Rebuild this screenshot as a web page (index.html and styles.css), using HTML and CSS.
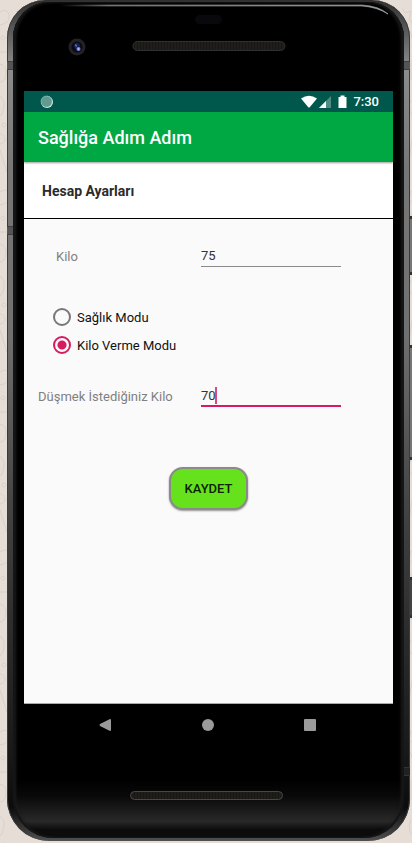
FILE: index.html
```html
<!DOCTYPE html>
<html lang="tr">
<head>
<meta charset="utf-8">
<meta name="viewport" content="width=device-width, initial-scale=1">
<title>Sağlığa Adım Adım</title>
<link rel="stylesheet" href="styles.css">
</head>
<body>
<svg class="wallpaper" aria-hidden="true">
  <defs>
    <pattern id="doodles" width="412" height="180" patternUnits="userSpaceOnUse">
      <g fill="none" stroke="#d8d0c9" stroke-width="1">
        <path d="M0 12q7-5 9 3t-9 10M0 52h8M3 36a2 2 0 1 0 .1 0M0 64q7 2 6 10t-6 8M0 96q5 4 4 11t-4 9M0 134a5 5 0 1 0 .1 0M0 150l7 22M4 123a2 2 0 1 0 .1 0"/>
        <path d="M402 8l3 5 6-2-2 8 3 4M404 31q8-2 8 8M411 60v20M411 100q-4 8 1 15M412 140l-3 20"/>
      </g>
    </pattern>
  </defs>
  <rect width="100%" height="100%" fill="url(#doodles)"/>
</svg>
<div class="phone">
  <i class="band band-left-top"></i>
  <i class="band band-left-mid"></i>
  <i class="band band-right-top"></i>
  <i class="band band-right-bottom"></i>
  <i class="key key-power"></i>
  <i class="key key-volume"></i>
  <i class="key key-small"></i>
  <div class="face">
    <svg class="bezel bezel-top" viewBox="0 0 369 89" aria-hidden="true">
      <defs>
        <pattern id="mesh" width="3" height="4" patternUnits="userSpaceOnUse">
          <rect width="3" height="4" fill="#181713"/>
          <path d="M1 0v4" stroke="#262420"/>
        </pattern>
        <linearGradient id="glint">
          <stop offset="0" stop-color="#000"/>
          <stop offset=".15" stop-color="#707578"/>
          <stop offset=".9" stop-color="#8d9294"/>
          <stop offset="1" stop-color="#aaa"/>
        </linearGradient>
      </defs>
      <path d="M36 3H338Q355 4 364 12Q353 5 338 4H36z" fill="url(#glint)" stroke="url(#glint)" stroke-width=".7"/>
      <rect x="171" y="13" width="27" height="9" rx="4.500" fill="#08080d"/>
      <circle cx="53" cy="45" r="8.500" fill="#242224"/>
      <circle cx="53" cy="45" r="5.500" fill="#0b0c18"/>
      <circle cx="53" cy="44" r="3" fill="#17204f"/>
      <path d="M51 42l2 1v2l-2-1z" fill="#5465bd"/>
      <circle cx="54.500" cy="47" r="2" fill="#7785dc"/>
      <circle cx="54.500" cy="47" r=".8" fill="#cbd2ff"/>
      <rect x="109" y="39.500" width="152" height="9" rx="4.500" fill="url(#mesh)" stroke="#303032"/>
    </svg>
    <main class="screen">
      <div class="status">
        <svg class="sync" viewBox="0 0 14 14" aria-hidden="true">
          <circle cx="7" cy="7" r="6" fill="#d8eee8"/>
          <circle cx="6.500" cy="6.500" r="5.500" fill="#609b91" stroke="#9cc5bd" stroke-dasharray="1 1"/>
        </svg>
        <svg class="signals" viewBox="0 0 46 14" aria-hidden="true">
          <path d="M0 3.500Q8-2 16 3.500L8.500 12.500h-1z" fill="#fff"/>
          <path d="M30 1v12H18z" fill="#4f8d84"/>
          <path d="M25 6v7h-7z" fill="#fff"/>
          <path d="M37.500 2h2V.5h4V2h2v11h-8z" fill="#fff"/>
        </svg>
        <time>7:30</time>
      </div>
      <header class="appbar"><h1>Sağlığa Adım Adım</h1></header>
      <h2 class="heading">Hesap Ayarları</h2>
      <form class="settings">
        <div class="field">
          <label class="indent" for="weight">Kilo</label>
          <input id="weight" type="text" inputmode="numeric" value="75">
        </div>
        <div class="modes">
          <label><input type="radio" name="mode">Sağlık Modu</label>
          <label><input type="radio" name="mode" checked>Kilo Verme Modu</label>
        </div>
        <div class="field active">
          <label for="target">Düşmek İstediğiniz Kilo</label>
          <div class="entry">
            <input id="target" type="text" inputmode="numeric" value="70">
            <i class="caret"></i>
          </div>
        </div>
        <button class="save" type="button">KAYDET</button>
      </form>
    </main>
    <nav class="system">
      <button type="button" aria-label="Geri"><svg viewBox="0 0 12 12"><path d="M11 0q1 0 1 1v10q0 1-1 1L1 7Q0 6 1 5z"/></svg></button>
      <button type="button" aria-label="Ana ekran"><svg viewBox="0 0 12 12"><circle cx="6" cy="6" r="6"/></svg></button>
      <button type="button" aria-label="Son uygulamalar"><svg viewBox="0 0 12 12"><rect width="12" height="12" rx="1"/></svg></button>
    </nav>
    <svg class="bezel bezel-bottom" viewBox="0 0 369 92" aria-hidden="true">
      <rect x="106.500" y="45.500" width="152" height="8" rx="4" fill="url(#mesh)" stroke="#48484a"/>
    </svg>
  </div>
</div>
</body>
</html>
```
FILE: styles.css
```css
* {
  box-sizing: border-box;
}

body {
  margin: 0;
  padding: 0 2px 2px 7px;
  min-height: 100vh;
  background: #e5ddd6;
  font-family: Roboto, "Noto Sans", sans-serif;
  font-size: 13px;
  position: relative;
}

.wallpaper {
  position: absolute;
  inset: 0;
  width: 100%;
  height: 100%;
}

.phone {
  position: relative;
  min-height: calc(100vh - 2px);
  padding: 2px 6px 3px;
  display: flex;
  border-radius: 38px 38px 42px 42px;
  background: linear-gradient(#303030, #8c8c8c 8%, #777 20%, #707070 40%, #444 60%, #2c2c2c 75%, #181818 90%, #0c0c0c 96%, #505050);
  box-shadow: inset 1px 0 #3a3a3a, inset -1px 0 #3a3a3a;
}

.face {
  flex: 1;
  padding: 0 11px;
  display: flex;
  flex-direction: column;
  border-radius: 36px 36px 40px 40px;
  background: linear-gradient(#000 93%, #090909 95%, #292929 98%, #0c0c0c 99%);
  box-shadow: inset 2px 0 #151515, inset -2px 0 #151515, inset 3px 0 3px #1c1c1c, inset -3px 0 3px #1c1c1c;
}

.bezel {
  display: block;
  width: 100%;
  flex: none;
}

.band {
  position: absolute;
  width: 6px;
  height: 9px;
  background: #555557;
  border: solid #404042;
  border-width: 1px 0;
}

.band-left-top {
  left: 0;
  top: 61px;
}

.band-left-mid {
  left: 0;
  top: 226px;
}

.band-right-top {
  right: 0;
  top: 61px;
}

.band-right-bottom {
  right: 0;
  top: 767px;
  background: #222;
  border-color: #333;
}

.key {
  position: absolute;
  right: -2px;
  width: 2px;
  background: #777;
  border: solid #333;
  border-width: 3px 0;
}

.key-power {
  top: 216px;
  height: 59px;
}

.key-volume {
  top: 345px;
  height: 115px;
}

.key-small {
  top: 577px;
  height: 41px;
  background: #444;
}

.screen {
  flex: 1;
  display: flex;
  flex-direction: column;
  background: #fafafa;
  border-bottom: 1px solid #aaa;
}

.status {
  height: 21px;
  padding: 0 14px 0 16px;
  display: flex;
  align-items: center;
  background: #00574b;
  color: #fff;
  font-weight: 500;
}

.sync {
  width: 14px;
  height: 14px;
}

.signals {
  width: 46px;
  height: 14px;
  margin: 0 6px 0 auto;
}

.appbar {
  height: 50px;
  padding: 0 14px;
  display: flex;
  align-items: center;
  background: #00a844;
  box-shadow: 0 1px 2px #0006;
  position: relative;
}

h1,
h2 {
  margin: 0;
}

h1 {
  color: #fff;
  font-size: 18px;
  font-weight: 500;
}

.heading {
  height: 57px;
  padding: 2px 18px 0;
  display: flex;
  align-items: center;
  background: #fff;
  border-bottom: 1px solid #000;
  color: #2b2b2b;
  font-size: 14px;
  font-weight: 700;
}

.settings {
  padding: 24px 14px;
  display: flex;
  flex-direction: column;
}

.field {
  display: grid;
  grid-template-columns: 163px 140px;
  align-items: center;
  color: #808080;
}

.field label {
  padding-top: 3px;
}

.field .indent {
  padding-left: 18px;
}

.field input {
  display: block;
  width: 100%;
  height: 24px;
  padding: 2px 0 0;
  border: 0;
  border-bottom: 1px solid #8a8a8a;
  outline: 0;
  background: none;
  color: #333;
  font: inherit;
}

.active input {
  border-bottom: 2px solid #d81b60;
}

.entry {
  position: relative;
}

.caret {
  position: absolute;
  left: 14px;
  top: 4px;
  width: 2px;
  height: 17px;
  background: #e0457d;
}

.modes {
  padding: 36px 15px 24px;
  display: flex;
  flex-direction: column;
}

.modes label {
  height: 28px;
  display: flex;
  align-items: center;
  gap: 6px;
  color: #111;
}

.modes input {
  appearance: none;
  width: 18px;
  height: 18px;
  margin: 0;
  border: 2px solid #777;
  border-radius: 50%;
}

.modes input:checked {
  border-color: #d81b60;
  background: radial-gradient(circle, #d81b60 4px, transparent 5px);
}

.save {
  align-self: center;
  width: 79px;
  height: 43px;
  margin-top: 60px;
  padding: 0;
  border: 2px solid #8a8a8a;
  border-radius: 14px;
  background: #66e21c;
  box-shadow: 0 1px 2px #0006;
  color: #0c2200;
  font: 500 13px Roboto, "Noto Sans", sans-serif;
}

.system {
  height: 42px;
  padding: 0 32px 0 30px;
  display: flex;
  justify-content: space-between;
  align-items: center;
}

.system button {
  width: 102px;
  height: 42px;
  padding: 0;
  border: 0;
  display: grid;
  place-items: center;
  background: none;
}

.system svg {
  width: 12px;
  height: 12px;
  fill: #9a9a9a;
}
```
